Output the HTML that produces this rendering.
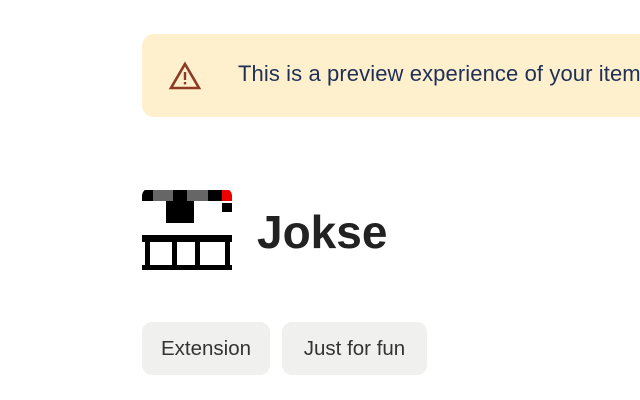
<!DOCTYPE html>
<html><head><style>
body{margin:0;width:640px;height:400px;background:#fff;overflow:hidden;position:relative;font-family:"Liberation Sans",sans-serif}
.ban{position:absolute;left:142px;top:34px;width:520px;height:83px;background:#feefcd;border-radius:12px}
.ban span{position:absolute;left:96px;top:27px;font-size:22px;letter-spacing:0.1px;color:#1f3057;white-space:nowrap}
.b{position:absolute}
.t{position:absolute;left:257px;top:205px;font-size:46px;font-weight:bold;color:#222}
.chip{position:absolute;top:322px;height:53px;border-radius:10px;background:#f0f1ef;color:#333;font-size:20.5px;line-height:53px;text-align:center}
</style></head><body>
<div class="ban"><svg style="position:absolute;left:26px;top:27px" width="34" height="30" viewBox="0 0 34 30"><path d="M17 3 L31 27 L3 27 Z" fill="none" stroke="#8c3b25" stroke-width="2.6" stroke-linejoin="miter"/><rect x="15.8" y="11" width="2.4" height="8" fill="#8c3b25"/><rect x="15.8" y="21" width="2.4" height="2.4" fill="#8c3b25"/></svg><span>This is a preview experience of your item</span></div>
<div class="b" style="left:142px;top:188px;width:90px;height:86px;overflow:hidden;border-radius:8px 8px 0 0">
<div class="b" style="left:0;top:2px;width:11px;height:11px;background:#000"></div>
<div class="b" style="left:11px;top:2px;width:20px;height:11px;background:#666"></div>
<div class="b" style="left:31px;top:2px;width:14px;height:11px;background:#000"></div>
<div class="b" style="left:45px;top:2px;width:21px;height:11px;background:#666"></div>
<div class="b" style="left:66px;top:2px;width:14px;height:11px;background:#000"></div>
<div class="b" style="left:80px;top:2px;width:10px;height:11px;background:#e00"></div>
<div class="b" style="left:24px;top:13px;width:28px;height:22px;background:#000"></div>
<div class="b" style="left:80px;top:15px;width:10px;height:9px;background:#000"></div>
<div class="b" style="left:0;top:47px;width:90px;height:7px;background:#000"></div>
<div class="b" style="left:3px;top:54px;width:5px;height:25px;background:#000"></div>
<div class="b" style="left:30px;top:54px;width:5px;height:25px;background:#000"></div>
<div class="b" style="left:53px;top:54px;width:5px;height:25px;background:#000"></div>
<div class="b" style="left:83px;top:54px;width:5px;height:25px;background:#000"></div>
<div class="b" style="left:0;top:77px;width:90px;height:5px;background:#000"></div>
</div>
<div class="t">Jokse</div>
<div class="chip" style="left:142px;width:128px">Extension</div>
<div class="chip" style="left:282px;width:145px">Just for fun</div>
</body></html>
